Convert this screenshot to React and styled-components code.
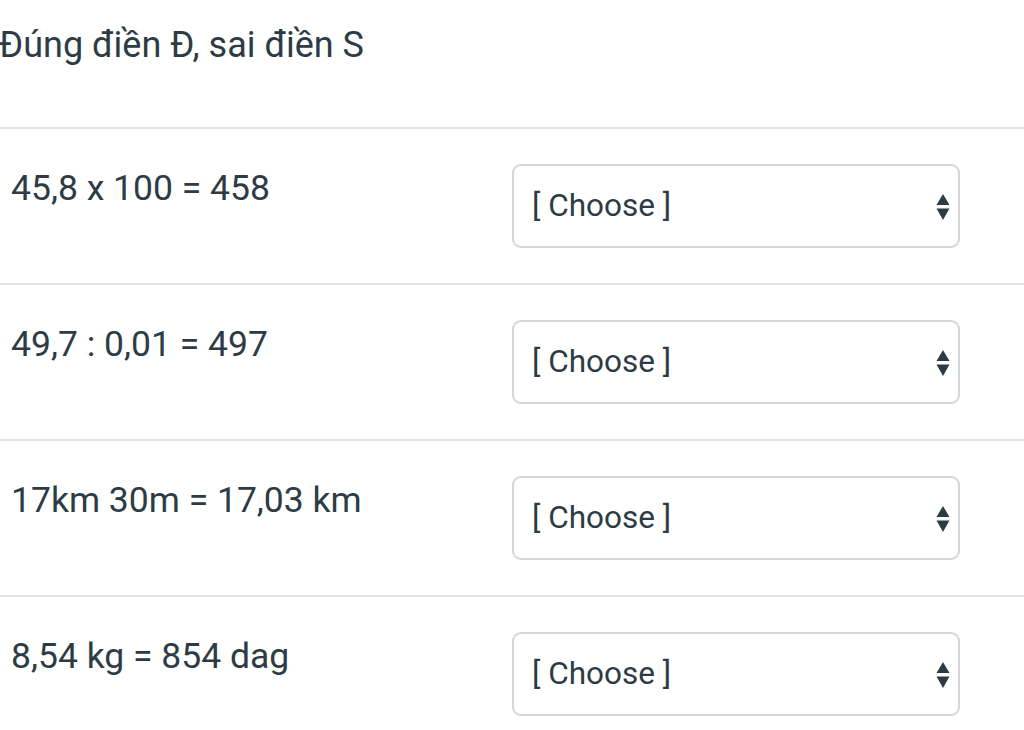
import React from "react";
import styled, { createGlobalStyle } from "styled-components";

const GlobalStyle = createGlobalStyle`
  html, body {
    margin: 0;
    padding: 0;
    background: #ffffff;
  }
  body {
    font-family: Roboto, "Liberation Sans", sans-serif;
    color: #2d3b45;
  }
`;

const Page = styled.div`
  width: 1024px;
  height: 730px;
  overflow: hidden;
  background: #ffffff;
`;

const Title = styled.div`
  font-size: 36px;
  line-height: 42px;
  padding: 24px 0 0 0;
  height: 127px;
  box-sizing: border-box;
  margin-left: -1px;
  color: #2d3b45;
`;

const Row = styled.div`
  display: grid;
  grid-template-columns: 512px 448px;
  border-top: 2px solid #e2e2e2;
  height: 156px;
  box-sizing: border-box;
  padding: 35px 0;
`;

const Statement = styled.div`
  font-size: 35.5px;
  line-height: 42px;
  padding: 3px 0 0 11px;
  color: #2d3b45;
`;

const SelectBox = styled.div`
  display: flex;
  align-items: center;
  justify-content: space-between;
  height: 84px;
  box-sizing: border-box;
  border: 2px solid #d3d6d9;
  border-radius: 9px;
  padding: 0 8px 2px 18px;
  background: #ffffff;
  cursor: pointer;
`;

const SelectText = styled.span`
  font-size: 31.5px;
  color: #2d3b45;
`;

const ArrowSvg = styled.svg`
  display: block;
  margin-top: 4px;
`;

// up/down sort carets like the native select indicator
const Arrows = () => (
  <ArrowSvg width="14" height="28" viewBox="0 0 14 28">
    <path d="M7 1 L13.5 12 L0.5 12 Z" fill="#2d3b45" />
    <path d="M0.5 15.5 L13.5 15.5 L7 27 Z" fill="#2d3b45" />
  </ArrowSvg>
);

const rows = [
  "45,8 x 100 = 458",
  "49,7 : 0,01 = 497",
  "17km 30m = 17,03 km",
  "8,54 kg = 854 dag",
];

export default function App() {
  return (
    <Page>
      <GlobalStyle />
      <Title>Đúng điền Đ, sai điền S</Title>
      {rows.map((r) => (
        <Row key={r}>
          <Statement>{r}</Statement>
          <SelectBox>
            <SelectText>[ Choose ]</SelectText>
            <Arrows />
          </SelectBox>
        </Row>
      ))}
    </Page>
  );
}
